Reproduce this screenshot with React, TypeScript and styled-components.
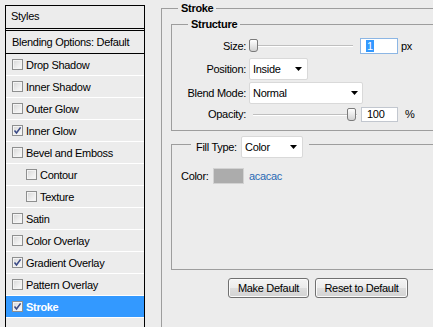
import React from "react";
import styled, { createGlobalStyle } from "styled-components";

const Global = createGlobalStyle`
  html, body { margin: 0; padding: 0; background: #ececec; overflow: hidden; }
  body {
    font-family: "Liberation Sans", Arial, sans-serif;
    font-size: 11px;
    color: #000;
    letter-spacing: -0.3px;
  }
  * { box-sizing: border-box; }
`;

const Dialog = styled.div`
  width: 433px;
  height: 327px;
  overflow: hidden;
  display: flex;
  align-items: flex-start;
`;

/* ---------- left styles list ---------- */
const StylesPanel = styled.div`
  margin: 5px 0 0 5px;
  width: 140px;
  height: 340px;
  flex: none;
  border: 1px solid #000;
  border-bottom: none;
  display: flex;
  flex-direction: column;
`;

const PanelHeader = styled.div`
  height: 25px;
  padding: 0 0 3px 5px;
  display: flex;
  align-items: center;
  border-bottom: 3px double #000;
`;

const BlendingRow = styled.div`
  height: 23px;
  padding-left: 6px;
  display: flex;
  align-items: center;
  border-bottom: 1px solid #000;
`;

const StyleRow = styled.div<{ $indent?: boolean; $selected?: boolean }>`
  height: 22px;
  padding-left: ${(p) => (p.$indent ? 20 : 6)}px;
  display: flex;
  align-items: center;
  gap: 3px;
  border-bottom: 1px solid #fff;
  background: ${(p) => (p.$selected ? "#3399ff" : "transparent")};
  color: ${(p) => (p.$selected ? "#fff" : "#000")};
  font-weight: ${(p) => (p.$selected ? "bold" : "normal")};
`;

const CheckBox = styled.span`
  width: 11px;
  height: 11px;
  flex: none;
  border: 1px solid #8e8f8f;
  background: linear-gradient(135deg, #d6d6d6 0%, #eeeeee 60%, #fbfbfb 100%);
  box-shadow: inset 0 0 0 1px #f4f4f4;
  display: flex;
  align-items: center;
  justify-content: center;
`;

const Check = () => (
  <svg width="9" height="9" viewBox="0 0 9 9">
    <path d="M1.5 4.6 L3.5 7 L7.6 1.4" fill="none" stroke="#3b4a86" strokeWidth="1.6" />
  </svg>
);

/* ---------- right side ---------- */
const RightPane = styled.div`
  margin: 1px 0 0 16px;
  width: 300px;
  flex: none;
`;

const Group = styled.fieldset<{ $pad?: number; $padTop?: number; $padBottom?: number }>`
  margin: 0;
  min-width: 0;
  border: 1px solid #9d9d9d;
  padding: ${(p) => p.$padTop ?? 0}px ${(p) => p.$pad ?? 0}px ${(p) => p.$padBottom ?? 0}px
    ${(p) => p.$pad ?? 0}px;
`;

const GroupTitle = styled.legend<{ $offset: number }>`
  margin-left: ${(p) => p.$offset}px;
  padding: 0 3px;
  font-weight: bold;
  line-height: 14px;
`;

const FillLegend = styled.legend`
  margin-left: 10px;
  padding: 5px 6px 0 5px;
  display: flex;
  align-items: center;
`;

const FillLabel = styled.span`
  width: 45px;
`;

const Form = styled.div`
  display: grid;
  grid-template-columns: 74px 1fr;
  column-gap: 3px;
  padding: 6px 0 8px 0;
`;

const Label = styled.div<{ $h: number; $gap?: number }>`
  height: ${(p) => p.$h}px;
  margin-bottom: ${(p) => p.$gap ?? 0}px;
  display: flex;
  align-items: center;
  justify-content: flex-end;
`;

const Controls = styled.div<{ $h: number; $gap?: number }>`
  height: ${(p) => p.$h}px;
  margin-bottom: ${(p) => p.$gap ?? 0}px;
  display: flex;
  align-items: center;
`;

const Slider = styled.div<{ $w: number }>`
  position: relative;
  width: ${(p) => p.$w}px;
  height: 13px;
  flex: none;
`;

const Track = styled.div`
  position: absolute;
  left: 4px;
  right: 0;
  top: 6px;
  height: 2px;
  border-top: 1px solid #bfbfbf;
  border-bottom: 1px solid #ffffff;
`;

const Thumb = styled.div`
  position: absolute;
  top: 0;
  width: 9px;
  height: 13px;
  border: 1px solid #7b7b7b;
  border-radius: 2px 2px 3px 3px;
  background: linear-gradient(#ffffff, #e4e4e4 60%, #d2d2d2);
`;

const TextBox = styled.div<{ $w: number; $h: number; $focus?: boolean; $ml: number }>`
  width: ${(p) => p.$w}px;
  height: ${(p) => p.$h}px;
  margin-left: ${(p) => p.$ml}px;
  flex: none;
  background: #fff;
  border: 1px solid ${(p) => (p.$focus ? "#8cb6e4" : "#c2c7cf")};
  padding-left: 5px;
  display: flex;
  align-items: center;
`;

const Selected = styled.span`
  background: #3399ff;
  color: #fff;
  padding: 0 1px;
  line-height: 12px;
`;

const Unit = styled.span<{ $ml: number }>`
  margin-left: ${(p) => p.$ml}px;
`;

const Dropdown = styled.div<{ $w: number; $pr: number }>`
  width: ${(p) => p.$w}px;
  height: 22px;
  flex: none;
  background: #fff;
  border: 1px solid #d9d9d9;
  border-radius: 2px;
  padding: 0 ${(p) => p.$pr}px 0 3px;
  display: flex;
  align-items: center;
  justify-content: space-between;
  font-weight: normal;
`;

const Arrow = () => (
  <svg width="7" height="4" viewBox="0 0 7 4">
    <polygon points="0,0 7,0 3.5,4" fill="#000" />
  </svg>
);

const ColorRow = styled.div`
  height: 17px;
  display: flex;
  align-items: center;
`;

const ColorLabel = styled.span`
  width: 32px;
`;

const Swatch = styled.div<{ $color: string }>`
  width: 31px;
  height: 16px;
  background: ${(p) => p.$color};
  border: 1px solid #d2d2d2;
  margin-right: 5px;
`;

const HexText = styled.span`
  color: #2a6ab4;
`;

const ButtonRow = styled.div`
  display: flex;
  gap: 6px;
  padding-left: 57px;
  margin-top: 8px;
`;

const Button = styled.div<{ $w: number }>`
  width: ${(p) => p.$w}px;
  height: 20px;
  border: 1px solid #707070;
  border-radius: 3px;
  background: linear-gradient(#f4f4f4 0%, #ebebeb 50%, #dddddd 51%, #d3d3d3 100%);
  box-shadow: inset 0 0 0 1px #fbfbfb;
  display: flex;
  align-items: center;
  justify-content: center;
`;

const styleItems: { name: string; checked?: boolean; indent?: boolean; selected?: boolean }[] = [
  { name: "Drop Shadow" },
  { name: "Inner Shadow" },
  { name: "Outer Glow" },
  { name: "Inner Glow", checked: true },
  { name: "Bevel and Emboss" },
  { name: "Contour", indent: true },
  { name: "Texture", indent: true },
  { name: "Satin" },
  { name: "Color Overlay" },
  { name: "Gradient Overlay", checked: true },
  { name: "Pattern Overlay" },
  { name: "Stroke", checked: true, selected: true },
];

export default function App() {
  return (
    <Dialog>
      <Global />
      <StylesPanel>
        <PanelHeader>Styles</PanelHeader>
        <BlendingRow>Blending Options: Default</BlendingRow>
        {styleItems.map((s) => (
          <StyleRow key={s.name} $indent={s.indent} $selected={s.selected}>
            <CheckBox>{s.checked && <Check />}</CheckBox>
            {s.name}
          </StyleRow>
        ))}
      </StylesPanel>

      <RightPane>
        <Group $pad={9} $padTop={2} $padBottom={40}>
          <GroupTitle $offset={7}>Stroke</GroupTitle>
          <Group>
            <GroupTitle $offset={16}>Structure</GroupTitle>
            <Form>
              <Label $h={17} $gap={4}>Size:</Label>
              <Controls $h={17} $gap={4}>
                <Slider $w={104}>
                  <Track />
                  <Thumb style={{ left: 0 }} />
                </Slider>
                <TextBox $w={38} $h={16} $focus $ml={7}>
                  <Selected>1</Selected>
                </TextBox>
                <Unit $ml={3}>px</Unit>
              </Controls>

              <Label $h={22} $gap={2}>Position:</Label>
              <Controls $h={22} $gap={2}>
                <Dropdown $w={59} $pr={5}>
                  Inside
                  <Arrow />
                </Dropdown>
              </Controls>

              <Label $h={22} $gap={2}>Blend Mode:</Label>
              <Controls $h={22} $gap={2}>
                <Dropdown $w={114} $pr={4}>
                  Normal
                  <Arrow />
                </Dropdown>
              </Controls>

              <Label $h={16}>Opacity:</Label>
              <Controls $h={16}>
                <Slider $w={108}>
                  <Track />
                  <Thumb style={{ left: 98 }} />
                </Slider>
                <TextBox $w={37} $h={15} $ml={4}>
                  100
                </TextBox>
                <Unit $ml={7}>%</Unit>
              </Controls>
            </Form>
          </Group>

          <Group $pad={9} $padTop={9} $padBottom={85}>
            <FillLegend>
              <FillLabel>Fill Type:</FillLabel>
              <Dropdown $w={62} $pr={5}>
                Color
                <Arrow />
              </Dropdown>
            </FillLegend>
            <ColorRow>
              <ColorLabel>Color:</ColorLabel>
              <Swatch $color="#acacac" />
              <HexText>acacac</HexText>
            </ColorRow>
          </Group>

          <ButtonRow>
            <Button $w={81}>Make Default</Button>
            <Button $w={93}>Reset to Default</Button>
          </ButtonRow>
        </Group>
      </RightPane>
    </Dialog>
  );
}
